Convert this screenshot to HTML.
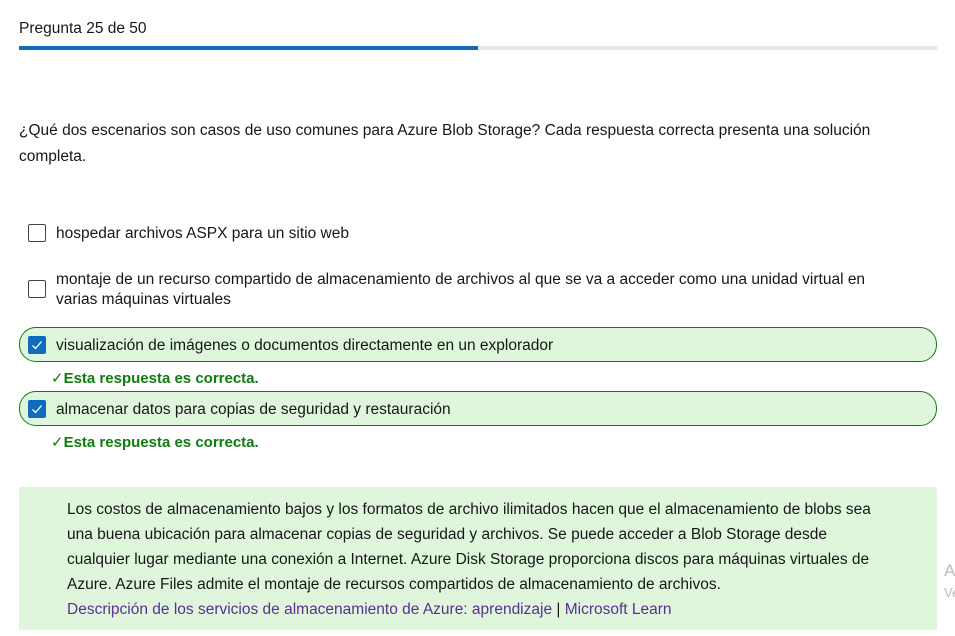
<!DOCTYPE html>
<html><head><meta charset="utf-8"><style>
body{margin:0;width:955px;height:636px;overflow:hidden;background:#fff;font-family:"Liberation Sans",sans-serif;color:#171717;position:relative}
.a{position:absolute}
.t{font-size:15.5px}
.cb{position:absolute;width:18px;height:18px;border:1px solid #444;border-radius:2px;box-sizing:border-box;background:#fff}
.cbc{background:#0f6cbd;border-color:#0f6cbd}
.opt{position:absolute;left:19px;width:918px;height:35px;border:1px solid #107c10;border-radius:17px;background:#dff6dd;box-sizing:border-box}
.ok{position:absolute;left:51px;color:#107c10;font-weight:bold;font-size:15px}
</style></head><body>
<div class="a t" style="left:19px;top:20px">Pregunta 25 de 50</div>
<div class="a" style="left:19px;top:46px;width:918px;height:4px;background:#e6e6e6"></div>
<div class="a" style="left:19px;top:46px;width:459px;height:4px;background:#0f6cbd"></div>
<div class="a t" style="left:19px;top:118px;line-height:26px">¿Qué dos escenarios son casos de uso comunes para Azure Blob Storage? Cada respuesta correcta presenta una solución<br>completa.</div>
<div class="cb" style="left:28px;top:224px"></div>
<div class="a t" style="left:56px;top:225px">hospedar archivos ASPX para un sitio web</div>
<div class="cb" style="left:28px;top:280px"></div>
<div class="a t" style="left:56px;top:270px;line-height:20px">montaje de un recurso compartido de almacenamiento de archivos al que se va a acceder como una unidad virtual en<br>varias máquinas virtuales</div>
<div class="opt" style="top:327px"></div>
<div class="cb cbc" style="left:28px;top:336px"><svg width="16" height="16" viewBox="0 0 16 16"><path d="M3.5 8.5l3 3 6-7" stroke="#fff" stroke-width="1.3" fill="none"/></svg></div>
<div class="a t" style="left:56px;top:337px">visualización de imágenes o documentos directamente en un explorador</div>
<div class="ok" style="top:369px"><span style="font-weight:normal">✓</span>Esta respuesta es correcta.</div>
<div class="opt" style="top:391px"></div>
<div class="cb cbc" style="left:28px;top:400px"><svg width="16" height="16" viewBox="0 0 16 16"><path d="M3.5 8.5l3 3 6-7" stroke="#fff" stroke-width="1.3" fill="none"/></svg></div>
<div class="a t" style="left:56px;top:401px">almacenar datos para copias de seguridad y restauración</div>
<div class="ok" style="top:433px"><span style="font-weight:normal">✓</span>Esta respuesta es correcta.</div>
<div class="a" style="left:19px;top:487px;width:918px;height:143px;background:#dff6dd"></div>
<div class="a t" style="left:67px;top:497px;line-height:25px;color:#171717">Los costos de almacenamiento bajos y los formatos de archivo ilimitados hacen que el almacenamiento de blobs sea<br>una buena ubicación para almacenar copias de seguridad y archivos. Se puede acceder a Blob Storage desde<br>cualquier lugar mediante una conexión a Internet. Azure Disk Storage proporciona discos para máquinas virtuales de<br>Azure. Azure Files admite el montaje de recursos compartidos de almacenamiento de archivos.<br><span style="color:#5c2e91">Descripción de los servicios de almacenamiento de Azure: aprendizaje</span> | <span style="color:#5c2e91">Microsoft Learn</span></div>
<div class="a" style="left:944px;top:561px;font-size:17px;color:#bbb">A</div>
<div class="a" style="left:944px;top:585px;font-size:13px;color:#bbb">Ve</div>
</body></html>
